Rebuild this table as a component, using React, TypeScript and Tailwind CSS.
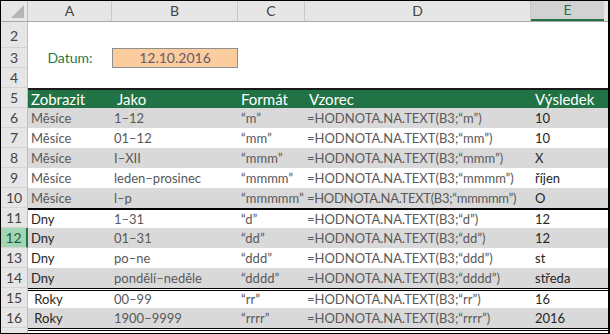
const cols = "grid grid-cols-[27px_84px_126px_67px_226px_77px]";

type Row = {
  n: number;
  a: string;
  b: string;
  c: string;
  d: string;
  e: string;
  gray: boolean;
  top?: string;
  dark?: boolean;
  sel?: boolean;
  tight?: boolean;
};

const rows: Row[] = [
  { n: 6, a: "Měsíce", b: "1–12", c: "“m”", d: "=HODNOTA.NA.TEXT(B3;“m”)", e: "10", gray: true },
  { n: 7, a: "Měsíce", b: "01–12", c: "“mm”", d: "=HODNOTA.NA.TEXT(B3;“mm”)", e: "10", gray: false },
  { n: 8, a: "Měsíce", b: "I–XII", c: "“mmm”", d: "=HODNOTA.NA.TEXT(B3;“mmm”)", e: "X", gray: true },
  { n: 9, a: "Měsíce", b: "leden–prosinec", c: "“mmmm”", d: "=HODNOTA.NA.TEXT(B3;“mmmm”)", e: "říjen", gray: false },
  { n: 10, a: "Měsíce", b: "l–p", c: "“mmmmm”", d: "=HODNOTA.NA.TEXT(B3;“mmmmm”)", e: "O", gray: true, tight: true },
  { n: 11, a: "Dny", b: "1–31", c: "“d”", d: "=HODNOTA.NA.TEXT(B3;“d”)", e: "12", gray: false, top: "border-t-2 border-black", dark: true },
  { n: 12, a: "Dny", b: "01–31", c: "“dd”", d: "=HODNOTA.NA.TEXT(B3;“dd”)", e: "12", gray: true, dark: true, sel: true },
  { n: 13, a: "Dny", b: "po–ne", c: "“ddd”", d: "=HODNOTA.NA.TEXT(B3;“ddd”)", e: "st", gray: false, dark: true },
  { n: 14, a: "Dny", b: "pondělí–neděle", c: "“dddd”", d: "=HODNOTA.NA.TEXT(B3;“dddd”)", e: "středa", gray: true, dark: true },
  { n: 15, a: " Roky", b: "00–99", c: "“rr”", d: "=HODNOTA.NA.TEXT(B3;“rr”)", e: "16", gray: false, top: "border-t-[3px] border-double border-black", dark: true },
  { n: 16, a: " Roky", b: "1900–9999", c: "“rrrr”", d: "=HODNOTA.NA.TEXT(B3;“rrrr”)", e: "2016", gray: true, dark: true },
];

function RowHead({ n, sel, className = "" }: { n?: number; sel?: boolean; className?: string }) {
  return (
    <div
      className={`flex items-center justify-center border-b border-[#d4d4d4] ${
        sel ? "bg-[#a0d6b4] text-[#1d5c37] border-r-2 border-r-[#217346]" : "bg-[#e6e6e6] text-[#444] border-r border-r-[#bdbdbd]"
      } ${className}`}
    >
      {n}
    </div>
  );
}

export default function App() {
  return (
    <div
      className="w-[610px] h-[334px] overflow-hidden bg-white border-t border-l border-b border-r-2 border-black text-[13px] leading-none"
      style={{ fontFamily: "Lato, 'Open Sans', sans-serif" }}
    >
      {/* column letters */}
      <div className={`${cols} h-[21px] bg-[#e6e6e6] border-b border-[#a8a8a8] text-[#444] text-[14px]`}>
        <div className="relative border-r border-[#bdbdbd]">
          <div className="absolute right-[3px] bottom-[3px] w-0 h-0 border-l-[13px] border-l-transparent border-b-[13px] border-b-[#b5b5b5]" />
        </div>
        <div className="flex items-center justify-center border-r border-[#c8c8c8]">A</div>
        <div className="flex items-center justify-center border-r border-[#c8c8c8]">B</div>
        <div className="flex items-center justify-center border-r border-[#c8c8c8]">C</div>
        <div className="flex items-center justify-center border-r border-[#c8c8c8]">D</div>
        <div className="flex">
          <div className="flex-1 flex items-center justify-center bg-[#d2d2d2] text-[#217346] border-b-2 border-[#217346]">E</div>
          <div className="w-[4px]" />
        </div>
      </div>

      {/* row 2 */}
      <div className={`${cols} h-[26px] text-[14px]`}>
        <RowHead n={2} className="!items-end pb-[4px]" />
        <div className="col-span-5" />
      </div>

      {/* row 3 */}
      <div className={`${cols} h-[20px] text-[14px]`}>
        <RowHead n={3} />
        <div className="flex items-center justify-center text-[#1f7a4a]">Datum:</div>
        <div className="flex items-center justify-center bg-[#fbcc9e] border border-[#8e8e8e] text-[#6a5a6a]">12.10.2016</div>
        <div className="col-span-3" />
      </div>

      {/* row 4 */}
      <div className={`${cols} h-[20px] text-[14px]`}>
        <RowHead n={4} />
        <div className="col-span-5" />
      </div>

      {/* row 5 header */}
      <div className={`${cols} h-[20px] text-[14px]`}>
        <RowHead n={5} />
        <div className="col-span-5 grid grid-cols-[84px_126px_67px_226px_77px] bg-[#217346] text-white border-t-2 border-[#1a1a1a] text-[15px]">
          <div className="flex items-center pl-[3px]">Zobrazit</div>
          <div className="flex items-center pl-[5px]">Jako</div>
          <div className="flex items-center pl-[3px]">Formát</div>
          <div className="flex items-center pl-[4px]">Vzorec</div>
          <div className="flex items-center pl-[4px]">Výsledek</div>
        </div>
      </div>

      {rows.map(r => (
        <div key={r.n} className={`${cols} h-[20px]`}>
          <RowHead n={r.n} sel={r.sel} className="text-[14px]" />
          <div
            className={`col-span-5 grid grid-cols-[84px_126px_67px_226px_77px] ${r.gray ? "bg-[#d9d9d9]" : "bg-white"} ${r.top ?? ""}`}
          >
            <div className={`flex items-center pl-[3px] whitespace-pre ${r.dark ? "text-[#262626]" : "text-[#595959]"}`}>{r.a}</div>
            <div className="flex items-center pl-[2px] text-[#595959]">{r.b}</div>
            <div className="flex items-center pl-[3px] text-[#595959]">{r.c}</div>
            <div className={`flex items-center pl-[2px] text-[#595959] whitespace-nowrap ${r.tight ? "tracking-[-0.3px]" : ""}`}>{r.d}</div>
            <div className="flex items-center pl-[4px] text-[#262626]">{r.e}</div>
          </div>
        </div>
      ))}

      {/* row 17 partial */}
      <div className={`${cols} h-[20px]`}>
        <RowHead />
        <div className="col-span-5 border-t-[3px] border-double border-black" />
      </div>
    </div>
  );
}
